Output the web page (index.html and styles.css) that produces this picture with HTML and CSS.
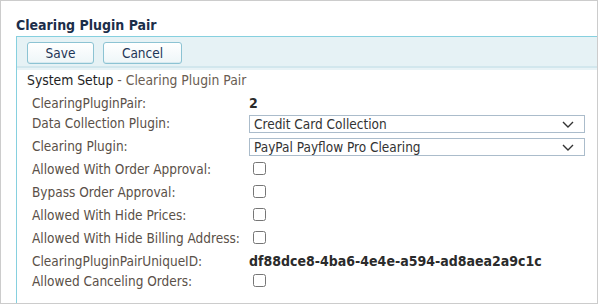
FILE: index.html
```html
<!DOCTYPE html>
<html lang="en">

<head>
    <meta charset="UTF-8">
    <title>Clearing Plugin Pair</title>
    <link rel="stylesheet" href="styles.css">
</head>

<body>
    <div class="page">
        <h1 class="title">Clearing Plugin Pair</h1>
        <div class="panel">
            <div class="toolbar">
                <button class="btn save" type="button">Save</button>
                <button class="btn cancel" type="button">Cancel</button>
            </div>
            <div class="crumb"><span class="crumb-root">System Setup</span> - Clearing Plugin Pair</div>
            <div class="fields">
                <div class="row text-row">
                    <label>ClearingPluginPair:</label>
                    <b>2</b>
                </div>
                <div class="row select-row">
                    <label>Data Collection Plugin:</label>
                    <div class="select">
                        <select>
                            <option>Credit Card Collection</option>
                        </select>
                        <svg class="chevron" width="12" height="7" viewBox="0 0 12 7"><path d="M1 1l5 5 5-5" fill="none" stroke="#333" stroke-width="1.4"/></svg>
                    </div>
                </div>
                <div class="row select-row">
                    <label>Clearing Plugin:</label>
                    <div class="select">
                        <select>
                            <option>PayPal Payflow Pro Clearing</option>
                        </select>
                        <svg class="chevron" width="12" height="7" viewBox="0 0 12 7"><path d="M1 1l5 5 5-5" fill="none" stroke="#333" stroke-width="1.4"/></svg>
                    </div>
                </div>
                <div class="row check-row">
                    <label>Allowed With Order Approval:</label>
                    <input type="checkbox">
                </div>
                <div class="row check-row">
                    <label>Bypass Order Approval:</label>
                    <input type="checkbox">
                </div>
                <div class="row check-row">
                    <label>Allowed With Hide Prices:</label>
                    <input type="checkbox">
                </div>
                <div class="row check-row">
                    <label>Allowed With Hide Billing Address:</label>
                    <input type="checkbox">
                </div>
                <div class="row text-row">
                    <label>ClearingPluginPairUniqueID:</label>
                    <b>df88dce8-4ba6-4e4e-a594-ad8aea2a9c1c</b>
                </div>
                <div class="row check-row">
                    <label>Allowed Canceling Orders:</label>
                    <input type="checkbox">
                </div>
            </div>
        </div>
    </div>
</body>

</html>
```

FILE: styles.css
```css
body {
    margin: 0;
    background-color: #fff;
    font-family: "DejaVu Sans Condensed", "DejaVu Sans", Verdana, sans-serif;
}

.page {
    display: flex;
    flex-direction: column;
    width: 596px;
    height: 302px;
    border: 1px solid #cccccc;
}

.title {
    margin: 0 0 2px 15px;
    padding-top: 16px;
    font-size: 14px;
    line-height: 17px;
    font-weight: bold;
    color: #1c2e4a;
}

.panel {
    flex: 1;
    margin-left: 15px;
    border-top: 1px solid #86d0df;
    border-left: 1px solid #86d0df;
}

.toolbar {
    display: flex;
    gap: 9px;
    height: 31px;
    padding: 5px 0 0 10px;
    box-sizing: border-box;
    background-color: #e6f2f5;
    border-bottom: 2px solid #d2e7ed;
    box-shadow: 0 2px 0 #e8f3f6;
}

.btn {
    height: 22px;
    padding: 0;
    font-family: inherit;
    font-size: 13.5px;
    color: #1d3557;
    background: linear-gradient(#ffffff, #eef6f8);
    border: 1px solid #8cc3d3;
    border-radius: 3px;
    box-shadow: inset 0 -1px 0 #d7eaf0;
}

.save {
    width: 67px;
}

.cancel {
    width: 79px;
}

.crumb {
    margin: 4px 0 0 10px;
    font-size: 13.8px;
    line-height: 16px;
    color: #6a5d52;
}

.crumb-root {
    color: #1e1e1e;
}

.fields {
    padding: 3px 0 0 15px;
}

.row {
    display: flex;
    align-items: center;
    font-size: 13.5px;
    line-height: 16px;
    color: #5a5048;
}

.row label {
    width: 217px;
    flex-shrink: 0;
}

.row b {
    font-size: 14px;
    color: #2b2b2b;
}

.text-row {
    height: 20px;
    align-items: flex-end;
}

.select-row {
    height: 23px;
}

.check-row {
    height: 23px;
}

.select {
    position: relative;
    width: 336px;
    align-self: flex-end;
    margin-bottom: 1px;
}

.select select {
    display: block;
    width: 100%;
    height: 18px;
    padding: 0 0 0 4px;
    appearance: none;
    font-family: inherit;
    font-size: 13.5px;
    color: #333;
    background: #fff;
    border: 1px solid #abbccb;
    border-radius: 0;
    outline: none;
}

.chevron {
    position: absolute;
    top: 6px;
    right: 11px;
}

.row input[type="checkbox"] {
    width: 13px;
    height: 13px;
    margin: 0 0 0 4px;
}
```
